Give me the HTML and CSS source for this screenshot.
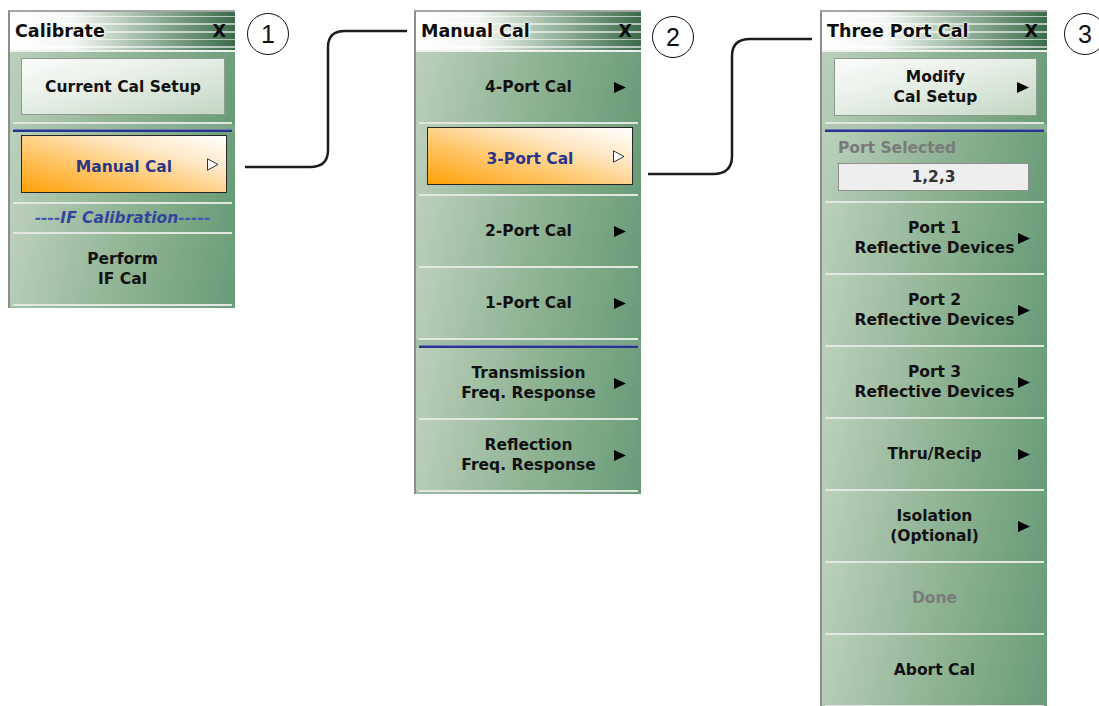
FILE: index.html
```html
<!DOCTYPE html>
<html lang="en">
  <head>
    <meta charset="UTF-8" />
    <meta name="viewport" content="width=device-width, initial-scale=1.0" />
    <title>Calibration Menus</title>
    <link rel="stylesheet" href="styles.css">
  </head>
  <body>
    <div class="canvas">
      <div class="menus">
        <!-- Calibrate -->
        <div class="menu">
          <div class="menu-head">
            <span class="menu-title">Calibrate</span>
            <span class="menu-close">X</span>
          </div>
          <div class="item slot">
            <div class="btn btn-plain"><span class="label">Current Cal Setup</span></div>
          </div>
          <div class="rule"></div>
          <div class="item slot slot-on">
            <div class="btn btn-on">
              <span class="label">Manual Cal</span>
              <svg class="arrow" width="12" height="13" viewBox="0 0 12 13"><path d="M0.5 0.8 L11 6.5 L0.5 12.2 Z" fill="#fff" stroke="#333" stroke-width="1"/></svg>
            </div>
          </div>
          <div class="item note"><span class="label">----<b>IF Calibration</b>-----</span></div>
          <div class="item"><span class="label">Perform<br>IF Cal</span></div>
        </div>

        <!-- Manual Cal -->
        <div class="menu">
          <div class="menu-head">
            <span class="menu-title">Manual Cal</span>
            <span class="menu-close">X</span>
          </div>
          <div class="item">
            <span class="label">4-Port Cal</span>
            <svg class="arrow" width="12" height="11" viewBox="0 0 12 11"><path d="M0 0 L12 5.5 L0 11 Z"/></svg>
          </div>
          <div class="item slot slot-on">
            <div class="btn btn-on">
              <span class="label">3-Port Cal</span>
              <svg class="arrow" width="12" height="13" viewBox="0 0 12 13"><path d="M0.5 0.8 L11 6.5 L0.5 12.2 Z" fill="#fff" stroke="#333" stroke-width="1"/></svg>
            </div>
          </div>
          <div class="item">
            <span class="label">2-Port Cal</span>
            <svg class="arrow" width="12" height="11" viewBox="0 0 12 11"><path d="M0 0 L12 5.5 L0 11 Z"/></svg>
          </div>
          <div class="item">
            <span class="label">1-Port Cal</span>
            <svg class="arrow" width="12" height="11" viewBox="0 0 12 11"><path d="M0 0 L12 5.5 L0 11 Z"/></svg>
          </div>
          <div class="rule"></div>
          <div class="item">
            <span class="label">Transmission<br>Freq. Response</span>
            <svg class="arrow" width="12" height="11" viewBox="0 0 12 11"><path d="M0 0 L12 5.5 L0 11 Z"/></svg>
          </div>
          <div class="item">
            <span class="label">Reflection<br>Freq. Response</span>
            <svg class="arrow" width="12" height="11" viewBox="0 0 12 11"><path d="M0 0 L12 5.5 L0 11 Z"/></svg>
          </div>
        </div>

        <!-- Three Port Cal -->
        <div class="menu">
          <div class="menu-head">
            <span class="menu-title">Three Port Cal</span>
            <span class="menu-close">X</span>
          </div>
          <div class="item slot">
            <div class="btn btn-plain btn-tall">
              <span class="label">Modify<br>Cal Setup</span>
              <svg class="arrow" width="12" height="11" viewBox="0 0 12 11"><path d="M0 0 L12 5.5 L0 11 Z"/></svg>
            </div>
          </div>
          <div class="rule"></div>
          <div class="ports">
            <div class="ports-title">Port Selected</div>
            <div class="ports-value">1,2,3</div>
          </div>
          <div class="item wide">
            <span class="label">Port 1<br>Reflective Devices</span>
            <svg class="arrow" width="12" height="11" viewBox="0 0 12 11"><path d="M0 0 L12 5.5 L0 11 Z"/></svg>
          </div>
          <div class="item wide">
            <span class="label">Port 2<br>Reflective Devices</span>
            <svg class="arrow" width="12" height="11" viewBox="0 0 12 11"><path d="M0 0 L12 5.5 L0 11 Z"/></svg>
          </div>
          <div class="item wide">
            <span class="label">Port 3<br>Reflective Devices</span>
            <svg class="arrow" width="12" height="11" viewBox="0 0 12 11"><path d="M0 0 L12 5.5 L0 11 Z"/></svg>
          </div>
          <div class="item wide">
            <span class="label">Thru/Recip</span>
            <svg class="arrow" width="12" height="11" viewBox="0 0 12 11"><path d="M0 0 L12 5.5 L0 11 Z"/></svg>
          </div>
          <div class="item wide">
            <span class="label">Isolation<br>(Optional)</span>
            <svg class="arrow" width="12" height="11" viewBox="0 0 12 11"><path d="M0 0 L12 5.5 L0 11 Z"/></svg>
          </div>
          <div class="item"><span class="label muted">Done</span></div>
          <div class="item"><span class="label">Abort Cal</span></div>
        </div>
      </div>

      <!-- leader lines between menus -->
      <svg class="links" width="1099" height="706" viewBox="0 0 1099 706">
        <path d="M245 167 H310 Q328 167 328 150 V47 Q328 31 345 31 H407" />
        <path d="M648 174 H713 Q732 174 732 156 V56 Q732 39 750 39 H812" />
      </svg>

      <div class="callout callout-1">1</div>
      <div class="callout callout-2">2</div>
      <div class="callout callout-3">3</div>
    </div>
  </body>
</html>
```

FILE: styles.css
```css
html,
body {
  margin: 0;
  overflow: hidden;
  background: #fff;
}
body {
  font-family: "DejaVu Sans", Verdana, sans-serif;
  color: #111;
}
.canvas {
  position: relative;
  width: 1099px;
  height: 706px;
  overflow: hidden;
}
.menus {
  display: flex;
  align-items: flex-start;
  gap: 179px;
  padding: 10px 0 0 8px;
}
.menu {
  width: 227px;
  box-sizing: border-box;
  border-left: 2px solid #8d8d8d;
  border-top: 2px solid #a5a5a5;
  padding-bottom: 2px;
  background: linear-gradient(105deg, #b7ccb6, #6f9e7c);
}
.menu-head {
  height: 38px;
  border-bottom: 2px solid #eef1ee;
  display: flex;
  align-items: center;
  justify-content: space-between;
  padding: 0 9px 0 5px;
  font-weight: bold;
  font-size: 17.5px;
  color: #0d0d0d;
  background:
    repeating-linear-gradient(to bottom, transparent 0 4px, rgba(255, 255, 255, 0.6) 4px 5.5px, transparent 5.5px 7.5px),
    linear-gradient(to right, #fff 0%, #f4f7f4 28%, #aac2ae 55%, #3b6b4a 100%);
}
.menu-title {
  text-shadow: 0 0 2px #fff, 0 0 3px #fff, 0 0 4px #fff;
}
.item {
  height: 72px;
  box-sizing: border-box;
  padding-bottom: 2px;
  display: grid;
  grid-template-columns: 1fr auto 1fr;
  align-items: center;
  text-align: center;
  font-weight: bold;
  font-size: 15.5px;
  line-height: 20px;
  background:
    linear-gradient(#e2e7e2, #e2e7e2) center bottom / calc(100% - 6px) 2px no-repeat,
    linear-gradient(105deg, #bcd0bb 0%, #90b494 50%, #689b77 100%);
}
.label {
  grid-column: 2;
}
.arrow {
  grid-column: 3;
  justify-self: end;
  margin-right: 15px;
}
.wide .arrow {
  margin-right: 17px;
}
.muted {
  color: #7b7b7b;
}
.note {
  height: 30px;
  font-style: italic;
  color: #4656b4;
}
.note b {
  color: #34449e;
}
.slot {
  display: block;
  padding: 6px 10px 0 11px;
}
.slot-on {
  padding: 3px 8px 0 11px;
}
.btn {
  height: 57px;
  box-sizing: border-box;
  display: grid;
  grid-template-columns: 1fr auto 1fr;
  align-items: center;
  text-align: center;
}
.btn .arrow {
  margin-right: 7px;
}
.btn-tall {
  height: 58px;
  margin-left: 1px;
}
.btn-plain {
  border: 1px solid #8e9c8f;
  background: linear-gradient(165deg, #fbfcfb 0%, #e6eee6 45%, #c2d7c3 100%);
}
.btn-on {
  height: 58px;
  border: 1px solid #262626;
  color: #2c3487;
  background: linear-gradient(to top right, #ffa108 0%, #ffc66a 38%, #ffe9c8 70%, #fff 100%);
}
.btn-on .label {
  margin-top: 6px;
}
.rule {
  height: 3px;
  margin: 5px 3px 0;
  background: linear-gradient(#7078b6 0 1px, #27358a 1px 3px);
}
.ports {
  height: 71px;
  box-sizing: border-box;
  padding: 6px 18px 0 16px;
  font-weight: bold;
  font-size: 15.5px;
  line-height: 20px;
  background:
    linear-gradient(#e2e7e2, #e2e7e2) center bottom / calc(100% - 6px) 2px no-repeat,
    linear-gradient(105deg, #bcd0bb 0%, #90b494 50%, #689b77 100%);
}
.ports-title {
  color: #7a7a7a;
}
.ports-value {
  margin-top: 5px;
  height: 28px;
  box-sizing: border-box;
  border: 1px solid #8e8e8e;
  background: #eeeeee;
  color: #333;
  text-align: center;
  line-height: 26px;
}
.links {
  position: absolute;
  left: 0;
  top: 0;
  pointer-events: none;
}
.links path {
  fill: none;
  stroke: #1c1c1c;
  stroke-width: 2.5;
}
.callout {
  position: absolute;
  width: 42px;
  height: 42px;
  box-sizing: border-box;
  border: 1.5px solid #111;
  border-radius: 50%;
  display: flex;
  align-items: center;
  justify-content: center;
  font-family: "Liberation Sans", Arial, sans-serif;
  font-size: 25px;
  color: #111;
  background: #fff;
}
.callout-1 {
  left: 247px;
  top: 13px;
}
.callout-2 {
  left: 652px;
  top: 16px;
}
.callout-3 {
  left: 1064px;
  top: 13px;
}
```
